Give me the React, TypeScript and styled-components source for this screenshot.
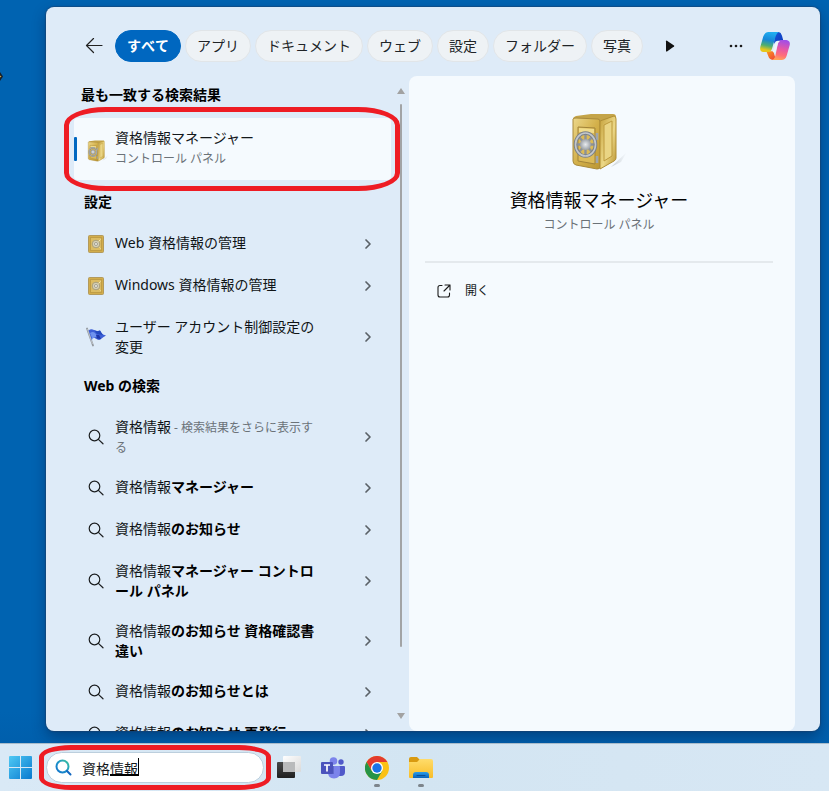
import React from 'react';
import styled, { createGlobalStyle, css } from 'styled-components';

const RED = '#ee1c24';

const GlobalStyle = createGlobalStyle`
  *, *::before, *::after { box-sizing: border-box; }
  body {
    margin: 0;
    font-family: "Noto Sans", "Noto Sans CJK JP", sans-serif;
    font-size: 14px;
    line-height: 20px;
    color: #14181b;
    background: #0063b1;
  }
  button, input { font: inherit; color: inherit; }
  button { cursor: pointer; }
`;

const Desktop = styled.div`
  position: relative;
  display: flex;
  flex-direction: column;
  height: 100vh;
  overflow: hidden;
  background: linear-gradient(#0063b1 90%, #0059a5);
`;

const PointerEdge = styled.svg`
  position: absolute;
  left: 0;
  top: 72px;
`;

const Workspace = styled.div`
  display: flex;
  flex: 1;
  min-height: 0;
  padding: 7px 9px 12px 46px;
`;

const SearchPanel = styled.main`
  display: flex;
  flex: 1;
  flex-direction: column;
  min-width: 0;
  overflow: hidden;
  border-radius: 8px;
  background: #deebf8;
  box-shadow: 0 0 1px 1px rgba(30, 60, 100, 0.5), 0 6px 14px rgba(0, 20, 60, 0.4);
`;

const FilterBar = styled.header`
  display: flex;
  flex: none;
  align-items: center;
  padding: 23px 30px 14px 32px;
`;

const IconButton = styled.button`
  display: grid;
  flex: none;
  place-items: center;
  width: 32px;
  height: 32px;
  padding: 0;
  border: 0;
  background: transparent;
`;

const Filters = styled.nav`
  display: flex;
  gap: 4px;
  margin: 0 11px 0 5px;
`;

const Pill = styled.button<{ $active?: boolean }>`
  flex: none;
  height: 32px;
  padding: 0 11px;
  border: 1px solid #e1e5e8;
  border-radius: 16px;
  background: #eef2f5;
  color: #202427;
  font-kerning: none;
  white-space: nowrap;
  ${(p) =>
    p.$active &&
    css`
      border-color: #0067c0;
      background: #0067c0;
      color: #fff;
      font-weight: 700;
    `}
`;

const HeaderActions = styled.div`
  display: flex;
  align-items: center;
  gap: 8px;
  margin-left: auto;
`;

const CopilotButton = styled(IconButton)`
  width: 30px;
`;

const Columns = styled.div`
  display: grid;
  flex: 1;
  grid-template-columns: 347px 16px minmax(0, 1fr);
  grid-template-rows: minmax(0, 1fr);
  min-height: 0;
  padding-right: 25px;
`;

const Results = styled.section`
  padding: 0 2px 0 28px;
`;

const TopHeading = styled.h2`
  margin: 0 0 4px;
  padding-left: 7px;
  font-size: 14px;
  line-height: 38px;
  color: #000;
`;

const GroupHeading = styled.h2`
  margin: 0;
  padding-left: 10px;
  font-size: 14px;
  line-height: 38px;
  padding-bottom: 2px;
  color: #000;
`;

const BestMatch = styled.div`
  position: relative;
  margin-bottom: 3px;
`;

const BestMatchButton = styled.button`
  position: relative;
  display: flex;
  align-items: center;
  gap: 9px;
  width: 100%;
  padding: 10px 12px 11px;
  border: 0;
  border-radius: 4px;
  background: #f5fafe;
  text-align: left;

  &::before {
    content: '';
    position: absolute;
    left: 0;
    top: 19px;
    width: 3px;
    height: 24px;
    border-radius: 1px;
    background: #0067c0;
  }
`;

const Stack = styled.span`
  display: flex;
  flex-direction: column;
  gap: 1px;
`;

const Caption = styled.span`
  font-size: 12px;
  font-kerning: none;
  color: #6b7278;
`;

const InlineCaption = styled(Caption)`
  line-height: 16px;
`;

const Marker = styled.span<{ $place: 'result' | 'taskbar' }>`
  position: absolute;
  z-index: 2;
  border: 5px solid ${RED};
  pointer-events: none;
  ${(p) =>
    p.$place === 'result'
      ? css`
          inset: -11px -9px -11px -10px;
          border-radius: 42px / 18px;
        `
      : css`
          inset: -8px -8px -8px -8px;
          border-radius: 32px / 12px;
        `}
`;

const Row = styled.button`
  display: flex;
  align-items: center;
  gap: 9px;
  width: 100%;
  min-height: 42px;
  padding: 10px 18px 10px 12px;
  border: 0;
  background: transparent;
  text-align: left;
`;

const IconSlot = styled.span`
  display: grid;
  flex: none;
  place-items: center;
  width: 20px;
  height: 20px;
`;

const RowText = styled.span`
  flex: 1;
  align-self: flex-start;
  margin-right: 35px;
  color: #101416;
  line-break: anywhere;

  b { color: #000; }
`;

const ScrollTrack = styled.div`
  display: flex;
  flex-direction: column;
  align-items: center;
  padding: 12px 0;
`;

const ScrollThumb = styled.span`
  flex: 0 1 543px;
  width: 2px;
  margin: 10px 0 auto;
  border-radius: 1px;
  background: #a2a4a6;
`;

const Preview = styled.aside`
  min-width: 0;
  padding: 34px 22px 0 16px;
  border-radius: 8px;
  background: #f5fafe;
`;

const PreviewHead = styled.div`
  display: flex;
  flex-direction: column;
  align-items: center;
  padding-bottom: 26px;
  border-bottom: 2px solid #e4e9ed;
`;

const PreviewTitle = styled.h1`
  margin: 13px 0 2px;
  font-size: 18px;
  font-weight: 400;
  line-height: 26px;
  color: #000;
`;

const OpenButton = styled.button`
  display: flex;
  align-items: center;
  gap: 14px;
  width: 100%;
  margin-top: 12px;
  padding: 6px 12px;
  border: 0;
  background: transparent;
  font-size: 12px;
`;

const Taskbar = styled.footer`
  display: flex;
  flex: none;
  align-items: center;
  height: 48px;
  position: relative;
  border-top: 1px solid #a9bccb;
  background: linear-gradient(90deg, #d9e9f6, #d3e5f2 50%, #d7e7f4);
`;

const StartButton = styled(IconButton)`
  width: 41px;
`;

const SearchBox = styled.label`
  position: relative;
  display: flex;
  flex: 0 1 218px;
  align-items: center;
  gap: 10px;
  height: 31px;
  margin: 0 3px 0 5px;
  padding: 0 8px;
  border: 1px solid #bccfdd;
  border-radius: 16px;
  background: #fff;
`;

const QueryField = styled.span`
  position: relative;
  flex: 1;
  min-width: 0;
`;

const QueryInput = styled.input`
  display: block;
  width: 100%;
  height: 20px;
  padding: 0;
  border: 0;
  outline: 0;
  background: transparent;
  font-family: "Noto Sans CJK JP", sans-serif;
`;

const Composition = styled.span`
  position: absolute;
  left: 28px;
  top: 0;
  width: 29px;
  height: 18px;
  border-right: 1px solid #000;
  border-bottom: 2px solid #000;
`;

const TaskButton = styled(IconButton)<{ $running?: boolean }>`
  position: relative;
  width: 44px;
  height: 47px;
  ${(p) =>
    p.$running &&
    css`
      &::after {
        content: '';
        position: absolute;
        bottom: 4px;
        left: 19px;
        width: 6px;
        height: 3px;
        border-radius: 2px;
        background: #7d858c;
      }
    `}
`;

const BackIcon = () => (
  <svg width="18" height="16" viewBox="0 0 18 16" fill="none" stroke="#222" strokeWidth="1.2" strokeLinecap="round" strokeLinejoin="round">
    <path d="M17 7.500H1.500M8.500 .5 1.500 7.500l7 7" />
  </svg>
);

const PlayIcon = () => (
  <svg width="10" height="12" viewBox="0 0 10 12">
    <path d="M1 1.2Q1 .2 2 .8L9 5.4Q9.600 6 9 6.600L2 11.4Q1 12 1 10.9Z" fill="#111" />
  </svg>
);

const MoreIcon = () => (
  <svg width="14" height="4" viewBox="0 0 14 4" fill="#1b1b1b">
    <circle cx="2" cy="2" r="1.300" />
    <circle cx="7" cy="2" r="1.300" />
    <circle cx="12" cy="2" r="1.300" />
  </svg>
);

const CopilotIcon = () => (
  <svg width="30" height="28" viewBox="0 0 90 84">
    <defs>
      <linearGradient id="cpLeft" x1="0.5" y1="0" x2="0.3" y2="1">
        <stop offset="0" stopColor="#20aef0" />
        <stop offset="0.4" stopColor="#1787d8" />
        <stop offset="0.68" stopColor="#4fae70" />
        <stop offset="0.9" stopColor="#e6c71c" />
      </linearGradient>
      <linearGradient id="cpRight" x1="0.6" y1="0" x2="0.4" y2="1">
        <stop offset="0" stopColor="#a04ee8" />
        <stop offset="0.45" stopColor="#e858a4" />
        <stop offset="0.75" stopColor="#ff6f78" />
        <stop offset="1" stopColor="#ffa657" />
      </linearGradient>
      <linearGradient id="cpTop" x1="0" y1="0" x2="1" y2="1">
        <stop offset="0" stopColor="#1757d8" />
        <stop offset="1" stopColor="#0d38bc" />
      </linearGradient>
      <linearGradient id="cpBottom" x1="0" y1="0" x2="1" y2="1">
        <stop offset="0" stopColor="#fa9a1c" />
        <stop offset="1" stopColor="#ee3c38" />
      </linearGradient>
    </defs>
    <path d="M44 0H56Q63 1 66 11L70 26H54Q46 26 42 36Z" fill="url(#cpTop)" />
    <path d="M19 58H40L48 84H38Q28 83 25 73Z" fill="url(#cpBottom)" />
    <path d="M26 0H57Q50 2 47 13L36 50Q33 60 22 60H10Q-2 60 1 44L10 13Q15 0 26 0Z" fill="url(#cpLeft)" />
    <path d="M64 24H79Q92 26 89 40L80 71Q76 84 64 84H35Q43 82 46 71L54 34Q57 24 64 24Z" fill="url(#cpRight)" />
    <path d="M54 27H60Q55 29 53 37L47 58Q45 62 38 60L45 36Q48 28 54 27Z" fill="#eef4fb" />
  </svg>
);

const SafeIcon = ({ size }: { size: number }) => {
  const id = `safe${size}`;
  return (
    <svg width={size} height={size} viewBox="0 0 64 64">
      <defs>
        <linearGradient id={`${id}f`} x1="0" y1="0" x2="1" y2="1">
          <stop offset="0" stopColor="#ecd78a" />
          <stop offset="0.5" stopColor="#d3b04a" />
          <stop offset="1" stopColor="#bb9735" />
        </linearGradient>
        <linearGradient id={`${id}s`} x1="0" y1="0" x2="1" y2="1">
          <stop offset="0" stopColor="#c6a23c" />
          <stop offset="0.55" stopColor="#ecd887" />
          <stop offset="1" stopColor="#b9932f" />
        </linearGradient>
        <radialGradient id={`${id}k`}>
          <stop offset="0" stopColor="#e8ebee" />
          <stop offset="1" stopColor="#9ba1a7" />
        </radialGradient>
        <linearGradient id={`${id}h`}>
          <stop offset="0" stopColor="#9ba3aa" stopOpacity="0.5" />
          <stop offset="1" stopColor="#9ba3aa" stopOpacity="0" />
        </linearGradient>
      </defs>
      <path d="M44 57 60 42 54 52Z" fill={`url(#${id}h)`} />
      <path d="M6 9Q6 7 9 6L24 4H46Q49 4 49 7L33 11Z" fill="#c4a449" />
      <path d="M6 9Q6 8 9 8L31 9Q33 9 33 12V57Q33 59 30 59L9 55Q6 54 6 51Z" fill={`url(#${id}f)`} stroke="#a88a3c" />
      <path d="M33 11 47 6Q49 6 49 9V48Q49 50 47 51L33 59Z" fill={`url(#${id}s)`} stroke="#b08e34" />
      <path d="M37 15 45 11V46L37 51Z" fill="#ead584" stroke="#bd9a3c" />
      <path d="M11 17 28 18V54L11 51Z" fill="#dcbb58" stroke="#a2843a" strokeWidth="1" />
      <path d="M12 18 27 19V23L12 22Z" fill="#f0dc8c" />
      <path d="M30 23v7M30 46v7" stroke="#9fa6ad" strokeWidth="2.600" />
      <g stroke="#8d9297" strokeWidth="2.400">
        <path d="M18.500 24v21M9 34.500h19M12 27l13 15M25 27 12 42" />
      </g>
      <ellipse cx="18.500" cy="34.500" rx="10" ry="11.500" fill="none" stroke="#7c8288" strokeWidth="3.600" />
      <ellipse cx="18.500" cy="34.500" rx="10" ry="11.500" fill="none" stroke="#c3c7cb" strokeWidth="1.600" />
      <circle cx="18.500" cy="34.500" r="5.500" fill={`url(#${id}k)`} />
    </svg>
  );
};

const VaultIcon = () => (
  <svg width="18" height="20" viewBox="0 0 18 20">
    <rect x="1.500" y="1.500" width="15" height="17" rx="1" fill="#d2ad4b" stroke="#b39a5c" />
    <rect x="3.500" y="3.500" width="11" height="13" fill="#dcbc62" stroke="#c09d45" />
    <circle cx="9" cy="10" r="3.800" fill="#d6cfb4" stroke="#a89f7c" />
    <circle cx="9" cy="10" r="1.500" fill="#efeee5" stroke="#8a8778" strokeWidth=".7" />
    <path d="m11.500 7.500 2-2M12.500 13.500l1 1" stroke="#f4e9b8" />
  </svg>
);

const FlagIcon = () => (
  <svg width="20" height="20" viewBox="0 0 20 20">
    <path d="M1 1.500 7 18.500" stroke="#92979d" strokeWidth="1.800" strokeLinecap="round" />
    <path d="M1.500 2 6.500 17" stroke="#dfe2e5" strokeWidth=".6" />
    <path d="M2.500 3.500Q5 1.500 8 3T14 3.500Q15 6 17 7.500L20 8.500Q17 10 15 12T9.500 11.500 6 13.500Z" fill="#3d5fd6" />
    <path d="M8 3Q11 5 14 3.500L17 8 11 7Z" fill="#254abf" />
    <path d="M4 6Q7 4 9 6L12 10Q9 9 6.500 12Z" fill="#6f92ee" />
    <path d="M10 8 13 8 15 12 11 11.500Z" fill="#1e36a8" />
  </svg>
);

const SearchIcon = () => (
  <svg width="16" height="16" viewBox="0 0 16 16" fill="none" stroke="#1c1f21" strokeWidth="1.200" strokeLinecap="round">
    <circle cx="6.500" cy="6.500" r="5.300" />
    <path d="m10.400 10.400 4.600 4.400" />
  </svg>
);

const ChevronIcon = () => (
  <svg width="10" height="12" viewBox="0 0 10 12" fill="none" stroke="#5a6167" strokeWidth="1.700" strokeLinecap="round" strokeLinejoin="round">
    <path d="m3 2 4 4-4 4" />
  </svg>
);

const ArrowMark = ({ down }: { down?: boolean }) => (
  <svg width="8" height="6" viewBox="0 0 8 6" fill="#a2a2a2">
    <path d={down ? 'M0 0H8L4 6Z' : 'M0 6H8L4 0Z'} />
  </svg>
);

const OpenIcon = () => (
  <svg width="14" height="14" viewBox="0 0 14 14" fill="none" stroke="#1a1a1a" strokeWidth="1.100" strokeLinecap="round" strokeLinejoin="round">
    <path d="M5 1.500H3Q1 1.500 1 3.500V11Q1 13 3 13H10.500Q12.500 13 12.500 11V9M8 1H13V6M13 1 7 7" />
  </svg>
);

const StartIcon = () => (
  <svg width="23" height="23" viewBox="0 0 23 23">
    <defs>
      <linearGradient id="winFill" x1="0" y1="0" x2="1" y2="1">
        <stop offset="0" stopColor="#4fc9f4" />
        <stop offset="1" stopColor="#0879cf" />
      </linearGradient>
    </defs>
    <path d="M1 0H11V11H0V1Q0 0 1 0ZM12 0H22Q23 0 23 1V11H12ZM0 12H11V23H1Q0 23 0 22ZM12 12H23V22Q23 23 22 23H12Z" fill="url(#winFill)" />
  </svg>
);

const TaskSearchIcon = () => (
  <svg width="17" height="17" viewBox="0 0 17 17" fill="none" strokeLinecap="round">
    <defs>
      <linearGradient id="lens" x1="1" y1="0" x2="0" y2="1">
        <stop offset="0" stopColor="#3cc49b" />
        <stop offset="0.5" stopColor="#1b93c9" />
        <stop offset="1" stopColor="#1474cc" />
      </linearGradient>
    </defs>
    <circle cx="7.500" cy="7.500" r="6" stroke="url(#lens)" strokeWidth="2" />
    <path d="m12 12 3.500 3.500" stroke="#1267c0" strokeWidth="2" />
  </svg>
);

const TaskViewIcon = () => (
  <svg width="24" height="23" viewBox="0 0 24 23">
    <defs>
      <linearGradient id="tvDark" x1="0" y1="0" x2="0" y2="1">
        <stop offset="0" stopColor="#484848" />
        <stop offset="1" stopColor="#202020" />
      </linearGradient>
      <linearGradient id="tvLight" x1="0" y1="0" x2="1" y2="1">
        <stop offset="0" stopColor="#fff" />
        <stop offset="1" stopColor="#d9d9d9" />
      </linearGradient>
    </defs>
    <rect y="6" width="18" height="16" rx="1" fill="url(#tvDark)" />
    <rect x="6" width="18" height="16" rx="1" fill="url(#tvLight)" />
    <path d="M6 6H18V16H7Q6 16 6 15Z" fill="#b9babb" />
  </svg>
);

const TeamsIcon = () => (
  <svg width="24" height="22" viewBox="0 0 24 22">
    <circle cx="20" cy="5" r="2.700" fill="#5059c9" />
    <circle cx="12.500" cy="4" r="3.800" fill="#7b83eb" />
    <path d="M16 9H23Q24 9 24 10V15Q24 19 20 19H16Z" fill="#5059c9" />
    <path d="M7 9H18Q19 9 19 10V15Q19 21.500 13 21.500T7 15Z" fill="#7b83eb" />
    <path d="M7 9H13V17H7.400L7 15Z" fill="#4b53b5" opacity=".55" />
    <rect y="5" width="12" height="12" rx="1" fill="#4b53bc" />
    <path d="M3 8H9M6 8V14.500" stroke="#fff" strokeWidth="1.700" />
  </svg>
);

const ChromeIcon = () => (
  <svg width="24" height="24" viewBox="0 0 24 24">
    <circle cx="12" cy="12" r="12" fill="#fbc116" />
    <path d="M1.600 6A12 12 0 0 1 22.400 6H12L6.800 15Z" fill="#e33b2e" />
    <path d="M1.600 6A12 12 0 0 0 12 24L17.200 15H6.800Z" fill="#269447" />
    <circle cx="12" cy="12" r="6" fill="#fff" />
    <circle cx="12" cy="12" r="4.700" fill="#1a73e8" />
  </svg>
);

const ExplorerIcon = () => (
  <svg width="24" height="22" viewBox="0 0 24 22">
    <defs>
      <linearGradient id="folder" x1="0" y1="0" x2="0" y2="1">
        <stop offset="0" stopColor="#ffdc6b" />
        <stop offset="1" stopColor="#f8bd28" />
      </linearGradient>
      <linearGradient id="tray" x1="0" y1="0" x2="0" y2="1">
        <stop offset="0" stopColor="#2b9ce8" />
        <stop offset="1" stopColor="#0b62b8" />
      </linearGradient>
    </defs>
    <path d="M0 2Q0 0 2 0H8L11 3V8H0Z" fill="#d99a10" />
    <path d="M0 5H8L11 2H22Q24 2 24 4V20Q24 21 23 21H1Q0 21 0 20Z" fill="url(#folder)" />
    <path d="M4 21V18Q4 15 7 15H17Q20 15 20 18V21Z" fill="url(#tray)" />
    <path d="M8 18.500H16" stroke="#0a4e96" strokeLinecap="round" />
  </svg>
);

const filters = ['すべて', 'アプリ', 'ドキュメント', 'ウェブ', '設定', 'フォルダー', '写真'];

const settings = [
  { label: 'Web 資格情報の管理', icon: <VaultIcon /> },
  { label: 'Windows 資格情報の管理', icon: <VaultIcon /> },
  { label: 'ユーザー アカウント制御設定の変更', icon: <FlagIcon /> },
];

const suggestions = [
  'マネージャー',
  'のお知らせ',
  'マネージャー コントロール パネル',
  'のお知らせ 資格確認書 違い',
  'のお知らせとは',
  'のお知らせ 再発行',
];

const ResultRow = ({ icon, children }: { icon: React.ReactNode; children: React.ReactNode }) => (
  <Row type="button">
    <IconSlot>{icon}</IconSlot>
    <RowText>{children}</RowText>
    <ChevronIcon />
  </Row>
);

export default function App() {
  return (
    <>
      <GlobalStyle />
      <Desktop>
        <PointerEdge width="3" height="9" viewBox="0 0 3 9" aria-hidden="true">
          <path d="M0 0 3 4.500 0 9Z" fill="#14202b" />
          <path d="M0 3.500 1.500 4.500 0 5.500Z" fill="#d9a441" />
        </PointerEdge>
        <Workspace>
          <SearchPanel>
            <FilterBar>
              <IconButton type="button" aria-label="戻る"><BackIcon /></IconButton>
              <Filters>
                {filters.map((name, i) => (
                  <Pill key={name} type="button" $active={i === 0}>{name}</Pill>
                ))}
              </Filters>
              <IconButton type="button" aria-label="次へ"><PlayIcon /></IconButton>
              <HeaderActions>
                <IconButton type="button" aria-label="オプション"><MoreIcon /></IconButton>
                <CopilotButton type="button" aria-label="Copilot"><CopilotIcon /></CopilotButton>
              </HeaderActions>
            </FilterBar>
            <Columns>
              <Results>
                <TopHeading>最も一致する検索結果</TopHeading>
                <BestMatch>
                  <BestMatchButton type="button">
                    <IconSlot><SafeIcon size={24} /></IconSlot>
                    <Stack>
                      <span>資格情報マネージャー</span>
                      <Caption>コントロール パネル</Caption>
                    </Stack>
                  </BestMatchButton>
                  <Marker $place="result" />
                </BestMatch>
                <GroupHeading>設定</GroupHeading>
                {settings.map((item) => (
                  <ResultRow key={item.label} icon={item.icon}>{item.label}</ResultRow>
                ))}
                <GroupHeading>Web の検索</GroupHeading>
                <ResultRow icon={<SearchIcon />}>
                  資格情報<InlineCaption> - 検索結果をさらに表示する</InlineCaption>
                </ResultRow>
                {suggestions.map((rest) => (
                  <ResultRow key={rest} icon={<SearchIcon />}>
                    資格情報<b>{rest}</b>
                  </ResultRow>
                ))}
              </Results>
              <ScrollTrack aria-hidden="true">
                <ArrowMark />
                <ScrollThumb />
                <ArrowMark down />
              </ScrollTrack>
              <Preview>
                <PreviewHead>
                  <SafeIcon size={64} />
                  <PreviewTitle>資格情報マネージャー</PreviewTitle>
                  <Caption>コントロール パネル</Caption>
                </PreviewHead>
                <OpenButton type="button"><OpenIcon />開く</OpenButton>
              </Preview>
            </Columns>
          </SearchPanel>
        </Workspace>
        <Taskbar>
          <StartButton type="button" aria-label="スタート"><StartIcon /></StartButton>
          <SearchBox>
            <TaskSearchIcon />
            <QueryField>
              <QueryInput type="text" defaultValue="資格情報" aria-label="検索" />
              <Composition />
            </QueryField>
            <Marker $place="taskbar" />
          </SearchBox>
          <TaskButton type="button" aria-label="タスク ビュー"><TaskViewIcon /></TaskButton>
          <TaskButton type="button" aria-label="Teams"><TeamsIcon /></TaskButton>
          <TaskButton type="button" aria-label="Chrome" $running><ChromeIcon /></TaskButton>
          <TaskButton type="button" aria-label="エクスプローラー" $running><ExplorerIcon /></TaskButton>
        </Taskbar>
      </Desktop>
    </>
  );
}
